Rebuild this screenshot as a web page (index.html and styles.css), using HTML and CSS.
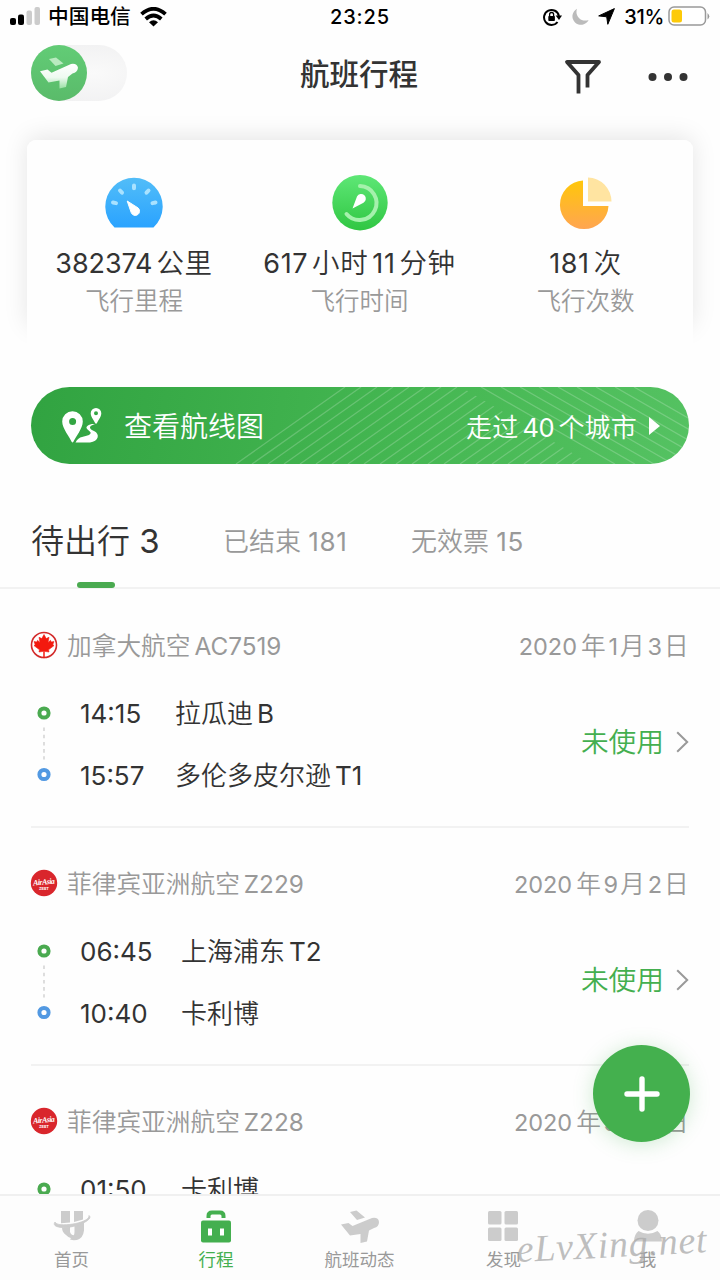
FILE: index.html
```html
<!DOCTYPE html>
<html lang="zh-CN">
<head>
<meta charset="utf-8">
<title>航班行程</title>
<link rel="stylesheet" href="styles.css">
</head>
<body>
<div class="app">
  <div class="status">
    <div class="status-left">
      <svg class="signal" width="30" height="20" viewBox="0 0 30 20"><rect x="0" y="12" width="6" height="7" rx="2"/><rect x="8" y="8.500" width="6" height="10.500" rx="2"/><g fill="#ccc"><rect x="16.500" y="4.500" width="5.500" height="14.500" rx="2"/><rect x="24.500" y="1" width="5.500" height="18" rx="2"/></g></svg>
      <span class="carrier">中国电信</span>
      <svg class="wifi" width="27" height="20" viewBox="0 0 27 20" fill="none" stroke="#000" stroke-width="3.800"><path d="M1.500 7.200Q13.500-3.600 25.500 7.200"/><path d="M5.700 12Q13.500 5 21.300 12"/><path d="M9 15.200Q13.500 11.200 18 15.200L13.500 19.500Z" fill="#000" stroke="none"/></svg>
    </div>
    <div class="clock">23:25</div>
    <div class="status-right">
      <svg width="19" height="18" viewBox="0 0 19 18"><path d="M14.500 14A7.500 7.500 0 1 1 15.900 8" fill="none" stroke="#000" stroke-width="2"/><path d="M12.600 7.500H19l-3 4.400z"/><rect x="5.300" y="8" width="6.600" height="5" rx=".8"/><path d="M6.600 8.500V6.500a2 2 0 0 1 4 0v2" fill="none" stroke="#000" stroke-width="1.300"/></svg>
      <svg class="moon" width="17" height="18" viewBox="0 0 17 18"><path d="M5 .8A8.500 8.500 0 1 0 16.600 12C9 14.500 2.500 8 5 .8z" fill="#bbb"/></svg>
      <svg class="arrow" width="17" height="17" viewBox="0 0 17 17"><path d="M16.400.6 9.800 16.300 8.700 8.800.7 7.900z" stroke="#000" stroke-linejoin="round"/></svg>
      <span class="percent">31%</span>
      <svg class="battery" width="43" height="21" viewBox="0 0 43 21"><rect x="1" y="1" width="36.500" height="18" rx="5" fill="#fff" stroke="#999" stroke-width="1.500"/><rect x="3.500" y="3.500" width="10.500" height="13" rx="2.500" fill="#fdca08"/><path d="M39.500 7q3.600 3.300 0 6.600z" fill="#999"/></svg>
    </div>
  </div>

  <header class="topbar">
    <div class="toggle"><div class="knob"><svg width="40" height="32" viewBox="0 0 40 32"><defs><linearGradient id="plane" x2="0" y2="1"><stop stop-color="#fff"/><stop offset=".55" stop-color="#eefaf0"/><stop offset="1" stop-color="#9ae0a4"/></linearGradient></defs><path d="M10 2 17 .5 24.500 6.500 16.500 9z" fill="#b9eabf"/><path d="M1 14.200 8.500 12.500l4 3.200L32 7q6-1 7 3.800-.500 4.500-5.500 5.700L29 20 27 30 20.500 31.500 20.500 23.500 9.500 25.500z" fill="url(#plane)"/></svg></div></div>
    <h1>航班行程</h1>
    <svg class="filter" width="38" height="38" viewBox="0 0 38 38" fill="none" stroke="#333" stroke-width="3.800" stroke-linecap="round" stroke-linejoin="round"><path d="M14.500 35.500V17L3 4h32L23.500 17v12.500" stroke-linecap="butt"/></svg>
    <svg class="more" width="40" height="10" viewBox="0 0 40 10" fill="#333"><circle cx="4.500" cy="5" r="4"/><circle cx="20" cy="5" r="4"/><circle cx="35.500" cy="5" r="4"/></svg>
  </header>

  <section class="stats">
    <div class="stat">
      <svg class="stat-icon" width="60" height="56" viewBox="0 0 60 56"><defs><linearGradient id="blue" x2="0" y2="1"><stop stop-color="#52bdf8"/><stop offset="1" stop-color="#2aa3ff"/></linearGradient></defs><path d="M10.500 52.500A28.700 28.700 0 1 1 49.500 52.500z" fill="url(#blue)"/><g stroke="#a9e2ff" stroke-width="4" stroke-linecap="round"><path d="M30 10.500v2.800M16 15.500l2 2.200M44.500 15.500l-2 2.200M9 27.500l3 .6M51.500 27.500l-3 .6"/></g><path d="M23.200 26 34.200 33a4.300 4.300 0 1 1-7 4.600z" fill="#fff" stroke="#fff" stroke-linejoin="round"/></svg>
      <div class="value"><b class="w1">382374</b>公里</div><div class="caption">飞行里程</div>
    </div>
    <div class="stat">
      <svg class="stat-icon" width="60" height="56" viewBox="0 0 60 56"><defs><linearGradient id="green" x2="0" y2="1"><stop stop-color="#5ee776"/><stop offset="1" stop-color="#30c642"/></linearGradient></defs><circle cx="30" cy="27.700" r="27.700" fill="url(#green)"/><path d="M30 11A17 17 0 1 1 16.500 39" fill="none" stroke="#a5f1ac" stroke-width="4" stroke-linecap="round"/><path d="M22.500 33.500 27 21.500a4.700 4.700 0 1 1 6.500 6.300z" fill="#fff"/></svg>
      <div class="value"><b class="w2">617</b>小时<b class="w3">11</b>分钟</div><div class="caption">飞行时间</div>
    </div>
    <div class="stat">
      <svg class="stat-icon" width="60" height="56" viewBox="0 0 60 56"><defs><linearGradient id="gold" x2="0" y2="1"><stop stop-color="#ffc70a"/><stop offset="1" stop-color="#ffa551"/></linearGradient></defs><path d="M27 5.500V31h25.500A24.300 24.300 0 1 1 27 5.500z" fill="url(#gold)"/><path d="M32 2.500a24 24 0 0 1 23.500 24H32z" fill="#ffe4a1"/></svg>
      <div class="value"><b class="w4">181</b>次</div><div class="caption">飞行次数</div>
    </div>
  </section>

  <section class="route">
    <svg class="pattern" width="658" height="77" viewBox="0 0 658 77" fill="none" stroke="#fff" stroke-opacity=".2" stroke-width="1.300">
      <defs><clipPath id="leftHatch"><path d="M190 0H430L560 77H190z"/></clipPath></defs>
      <path clip-path="url(#leftHatch)" d="M205 77 314 0M221 77 330 0M237 77 346 0M253 77 362 0M269 77 378 0M285 77 394 0M301 77 410 0M317 77 426 0M333 77 442 0M349 77 458 0M365 77 474 0M381 77 490 0M397 77 506 0M413 77 522 0M429 77 538 0M445 77 554 0M461 77 570 0M477 77 586 0M493 77 602 0M509 77 618 0M525 77 634 0M541 77 650 0"/>
      <path d="M450 0 584 77M470 0 604 77M489 0 623 77M508 0 642 77M527 0 661 77M546 0 680 77M565 0 699 77M584 0 718 77M603 0 737 77"/>
    </svg>
    <svg class="pins" width="40" height="36" viewBox="0 0 40 36"><path fill-rule="evenodd" d="M10.500 3.300a10.300 10.300 0 0 1 10.300 10.300c0 7-7.500 16-9.400 20.200q-.9 1.300-1.800 0C8 29.600.2 20.600.2 13.600A10.300 10.300 0 0 1 10.500 3.300zM10.600 10a3.500 3.500 0 1 0 0 7 3.500 3.500 0 0 0 0-7zM34 0a5.300 5.300 0 0 1 5.300 5.300c0 3.700-3.200 6.700-4.500 10.200h-1.500c-1.300-3.500-4.600-6.500-4.600-10.200A5.300 5.300 0 0 1 34 0zM34 3.300a2 2 0 1 0 0 4 2 2 0 0 0 0-4z" fill="#fff"/><path d="M33 16C27 15.500 23 18.500 25 20.800 27 23.500 31 24.500 27 27 23 29 17 27.500 13.500 34.500H28c8.500-1 10.500-8.500 4-11.500C27.500 21 25.500 18.500 33 16z" fill="#fff"/></svg>
    <span class="route-name">查看航线图</span>
    <span class="cities">走过<b>40</b>个城市</span>
    <svg class="play" width="13" height="18" viewBox="0 0 13 18"><path d="M1 0 12 9 1 18z" fill="#fff"/></svg>
  </section>

  <nav class="tabs">
    <div class="tab active">待出行 <b>3</b></div>
    <div class="tab ended">已结束 <b>181</b></div>
    <div class="tab">无效票 <b>15</b></div>
  </nav>

  <main class="flights">
    <article class="flight">
      <div class="flight-head">
        <svg class="airline" width="28" height="28" viewBox="0 0 28 28"><circle cx="14" cy="14" r="12.500" fill="#fff" stroke="#d22a2a" stroke-width="1.600"/><path d="M14 3.500 16.200 7.600 19 6.300 18 11.500 20.500 9.300 21.200 11 24 10.600 22.800 13.500 24 14.600 18.500 18.800 19 21 14.400 20.300V27h-.8V20.300L9 21 9.500 18.800 4 14.600 5.200 13.500 4 10.600 6.800 11 7.500 9.300 10 11.500 9 6.300 11.800 7.600z" fill="#f3190f" stroke="#f3190f" stroke-width=".6"/></svg>
        <span class="airline-name">加拿大航空<b>AC7519</b></span><span class="date"><b>2020</b>年<b>1</b>月<b>3</b>日</span>
      </div>
      <div class="flight-body">
        <svg class="track" width="14" height="76" viewBox="0 0 14 76" fill="#fff" stroke-width="4"><circle cx="7" cy="7" r="4.600" stroke="#4aaa50"/><path d="M7 21.500v32" stroke="#ccc" stroke-width="1.300" stroke-dasharray="3.600 3.600"/><circle cx="7" cy="68.500" r="4.600" stroke="#5299e2"/></svg>
        <div class="times"><span>14:15</span><span>15:57</span></div>
        <div class="places"><span>拉瓜迪<b>B</b></span><span>多伦多皮尔逊<b>T1</b></span></div>
        <div class="state">未使用<svg width="13" height="22" viewBox="0 0 13 22"><path d="m1.200 1.200 10 9.800-10 9.800" fill="none" stroke="#999" stroke-width="2"/></svg></div>
      </div>
    </article>
    <article class="flight">
      <div class="flight-head">
        <svg class="airline" width="28" height="28" viewBox="0 0 28 28"><circle cx="14" cy="14" r="13.200" fill="#d9262c"/><text class="logo-script" x="14" y="15.500" textLength="22" transform="rotate(-5 14 14)">AirAsia</text><text class="logo-small" x="14" y="20.500" textLength="10">ZEST</text></svg>
        <span class="airline-name">菲律宾亚洲航空<b>Z229</b></span><span class="date"><b>2020</b>年<b>9</b>月<b>2</b>日</span>
      </div>
      <div class="flight-body">
        <svg class="track" width="14" height="76" viewBox="0 0 14 76" fill="#fff" stroke-width="4"><circle cx="7" cy="7" r="4.600" stroke="#4aaa50"/><path d="M7 21.500v32" stroke="#ccc" stroke-width="1.300" stroke-dasharray="3.600 3.600"/><circle cx="7" cy="68.500" r="4.600" stroke="#5299e2"/></svg>
        <div class="times wide"><span>06:45</span><span>10:40</span></div>
        <div class="places"><span>上海浦东<b>T2</b></span><span>卡利博</span></div>
        <div class="state">未使用<svg width="13" height="22" viewBox="0 0 13 22"><path d="m1.200 1.200 10 9.800-10 9.800" fill="none" stroke="#999" stroke-width="2"/></svg></div>
      </div>
    </article>
    <article class="flight">
      <div class="flight-head">
        <svg class="airline" width="28" height="28" viewBox="0 0 28 28"><circle cx="14" cy="14" r="13.200" fill="#d9262c"/><text class="logo-script" x="14" y="15.500" textLength="22" transform="rotate(-5 14 14)">AirAsia</text><text class="logo-small" x="14" y="20.500" textLength="10">ZEST</text></svg>
        <span class="airline-name">菲律宾亚洲航空<b>Z228</b></span><span class="date"><b>2020</b>年<b>9</b>月<b>2</b>日</span>
      </div>
      <div class="flight-body">
        <svg class="track" width="14" height="76" viewBox="0 0 14 76" fill="#fff" stroke-width="4"><circle cx="7" cy="7" r="4.600" stroke="#4aaa50"/></svg>
        <div class="times wide"><span>01:50</span></div>
        <div class="places"><span>卡利博</span></div>
      </div>
    </article>
  </main>

  <button class="add" aria-label="添加行程"><svg width="36" height="36" viewBox="0 0 36 36"><path d="M18 3v30M3 18h30" stroke="#fff" stroke-width="5.400" stroke-linecap="round"/></svg></button>

  <footer class="bottom">
    <div class="item"><svg width="38" height="34" viewBox="0 0 38 34" fill="#ccc"><path d="M8 2h9v11.500L8 14.300zM21 2h9v8.500L21 13zM9 18.500 17 18v5q1 3.500 5.500 3.500-4 5.500-9.500-.500Q9 23 9 18.500zM21.500 17 31 13v8.500q-1 8-7 9.500-7 .500-7-1 4.500-2 4.500-7z"/><path d="M2 13C-2 18.500 11 20 22 17 31 14.500 40 9.500 36 6.500 37 10.500 27 14 20 15 11 16.500 3 16 2 13z" stroke="#ccc" stroke-width=".8"/></svg><span>首页</span></div>
    <div class="item current"><svg width="38" height="34" viewBox="0 0 38 34"><rect x="4" y="11.500" width="30" height="22" rx="2" fill="#44af4f"/><path d="M11.500 9V7q0-3.500 3.500-3.500h8q3.500 0 3.500 3.500v2" fill="none" stroke="#44af4f" stroke-width="4"/><path d="M11 19.500h4v7h-4zM23 19.500h4v7h-4z" fill="#fff"/></svg><span>行程</span></div>
    <div class="item"><svg width="40" height="34" viewBox="0 0 40 34" fill="#ccc"><path d="M10 3 16.500 1.500 25 8.500 17 11zM1 15.500 8.500 14l4 3L32 9q6.500-1 7 4 0 5-5 6L29 21.500 27 32.500 20.500 34 20.500 25 10 26.500z"/></svg><span>航班动态</span></div>
    <div class="item"><svg width="32" height="34" viewBox="0 0 32 34" fill="#ccc"><rect x="0" y="2" width="13.500" height="13.500" rx="1.500"/><rect x="16.500" y="2" width="13.500" height="13.500" rx="1.500"/><rect x="0" y="18.500" width="13.500" height="13.500" rx="1.500"/><rect x="16.500" y="18.500" width="13.500" height="13.500" rx="1.500"/></svg><span>发现</span></div>
    <div class="item"><svg width="32" height="34" viewBox="0 0 32 34" fill="#ccc"><circle cx="16" cy="11.500" r="10.500"/><path d="M2 32.500Q2 25.500 6.500 22q9.500 5.500 19 0 4.500 3.500 4.500 10.500z"/></svg><span>我</span></div>
  </footer>
  <svg class="watermark" width="200" height="54" viewBox="0 0 200 54"><text x="2" y="39" textLength="190" transform="rotate(-3 100 35)">eLvXing.net</text></svg>
</div>
</body>
</html>
```
FILE: styles.css
```css
* { box-sizing: border-box; }
body { margin: 0; background: #fefefe; font-family: Inter, "Noto Sans CJK SC", sans-serif; font-weight: 350; color: #333; }
.app { position: relative; width: 720px; height: 1280px; overflow: hidden; display: flex; flex-direction: column; white-space: nowrap; }
svg { display: block; flex: none; }
b { font-weight: 400; }
.status { height: 34px; display: grid; grid-template-columns: 1fr auto 1fr; align-items: center; padding: 0 10px; color: #000; margin-top: -1px; }
.status-left, .status-right { display: flex; align-items: center; }
.signal { margin-top: -1px; }
.status-right { justify-content: flex-end; }
.carrier { margin: 1px 0 0 8px; font-size: 20.700px; font-weight: 500; line-height: 34px; }
.wifi { margin-left: 9px; }
.clock { font-size: 20px; font-weight: 500; letter-spacing: .9px; }
.moon { margin-left: 10px; }
.arrow { margin-left: 9px; }
.percent { margin-left: 9px; font-size: 20px; font-weight: 500; letter-spacing: -.3px; }
.battery { margin: 0 -1px 0 4px; }
.topbar { height: 85px; display: flex; align-items: flex-start; padding: 12px 32px 0 31px; }
.toggle { width: 96px; height: 56px; border-radius: 28px; background: radial-gradient(ellipse at 65% 50%, #fafafa, #efeff0); }
.knob { width: 56px; height: 56px; border-radius: 50%; background: linear-gradient(#62cc76, #5abb6a); display: grid; place-items: center; }
h1 { margin: 8px 0 0 173px; width: 120px; font-size: 29.500px; font-weight: 500; line-height: 42px; }
.filter { margin: 13px 0 0 144px; }
.more { margin: 27px 0 0 auto; }
.stats { position: relative; isolation: isolate; margin: 22px 27px 0; height: 208px; display: grid; grid-template-columns: 214px 237px 215px; padding-top: 35px; }
.stats::before, .stats::after { content: ""; position: absolute; inset: 0; border-radius: 9px; background: #fefefe; z-index: -1; }
.stats::before { bottom: 18px; box-shadow: 0 -3px 24px rgba(0,0,0,.1); z-index: -2; }
.stats::after { bottom: -22px; }
.stat { display: flex; flex-direction: column; align-items: center; }
.value { margin-top: 12px; font-size: 27.500px; line-height: 40px; letter-spacing: .6px; }
.value b { font-size: 27px; margin-right: 4px; }
.value .w1 { letter-spacing: -.1px; }
.value .w3 { margin-left: 4px; }
.caption { font-size: 24.500px; line-height: 35px; color: #999; }
.route { position: relative; margin: 39px 31px 0; height: 77px; border-radius: 39px; overflow: hidden; background: linear-gradient(100deg, #31a341, #45b752 58%, #55c262); display: flex; align-items: center; padding: 0 28px 0 31px; color: #fff; }
.pattern { position: absolute; inset: 0; }
.pins, .route-name, .cities, .play { position: relative; }
.route-name { margin: 2px 0 0 22px; font-size: 28px; line-height: 40px; }
.cities { margin-left: auto; font-size: 26px; letter-spacing: .2px; }
.cities b { margin: 0 4px; font-size: 25.500px; letter-spacing: -.3px; }
.play { margin-left: 11px; }
.tabs { height: 125px; border-bottom: 2px solid #f2f2f2; padding: 51px 32px 0 31px; display: flex; align-items: flex-start; font-size: 26px; line-height: 54px; color: #999; }
.tab.active { position: relative; width: 192px; margin-top: -1px; font-size: 33px; color: #333; }
.tab.active::after { content: ""; position: absolute; left: 46px; top: 68px; width: 38px; height: 6px; border-radius: 3px; background: #4aaa50; }
.tab b { letter-spacing: .6px; }
.ended { width: 188px; }
.flights { flex: 1; min-height: 0; overflow: hidden; padding: 1px 31px 0; }
.flight { height: 238px; padding-top: 34px; border-bottom: 2px solid #f2f2f2; }
.flight-head { height: 40px; display: flex; align-items: center; color: #999; font-size: 24.700px; }
.airline { margin: 2px 0 0 -1px; }
.airline-name { margin-left: 9px; }
.airline-name b { margin-left: 4px; font-size: 24.300px; }
.date { margin-left: auto; letter-spacing: .2px; }
.date b { margin: 0 2.500px; font-size: 23.500px; letter-spacing: -.4px; }
.date b:first-child { margin: 0 4px 0 0; letter-spacing: 0; }
.logo-script { font: italic 700 8px "Liberation Serif", serif; fill: #fff; text-anchor: middle; }
.logo-small { font: 700 4px Inter, sans-serif; fill: #fff; text-anchor: middle; }
.flight-body { margin-top: 19px; height: 124px; display: flex; align-items: flex-start; font-size: 26px; line-height: 62px; }
.track { margin: 23px 0 0 6px; }
.times { width: 95px; margin-left: 29px; }
.times.wide { width: 101px; }
.times, .places { display: flex; flex-direction: column; }
.times { font-weight: 400; }
.places b { margin-left: 4px; }
.state { margin: 28px 0 0 auto; display: flex; align-items: center; gap: 12px; color: #44af4f; font-size: 27.700px; }
.bottom { height: 86px; background: #fdfdfd; border-top: 2px solid #f0f0f0; display: grid; grid-template-columns: repeat(5, 1fr); padding-top: 13px; }
.item { display: flex; flex-direction: column; align-items: center; font-size: 17.500px; line-height: 26px; font-weight: 400; color: #999; gap: 4px; margin-left: -1px; }
.current { color: #44af4f; margin-left: 0; }
.add { position: absolute; left: 593px; top: 1045px; width: 97px; height: 97px; border: 0; border-radius: 50%; background: #44b04e; box-shadow: 0 2px 20px rgba(68,176,78,.25); display: grid; place-items: center; }
.watermark { position: absolute; left: 515px; top: 1218px; }
.watermark text { font: italic 38px "Liberation Serif", cursive; fill: #aaa; fill-opacity: .75; }
```
